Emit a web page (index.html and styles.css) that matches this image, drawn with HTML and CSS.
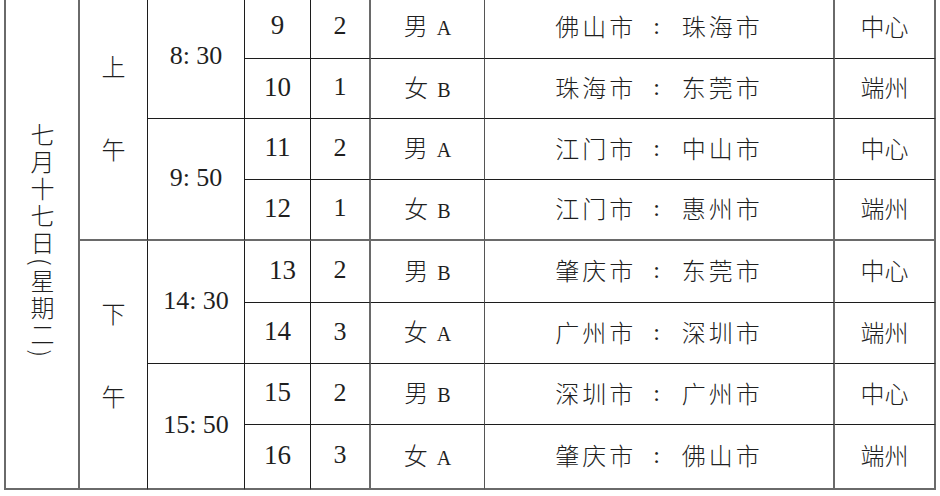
FILE: index.html
```html
<!DOCTYPE html>
<html lang="zh-CN">
<head>
<meta charset="utf-8">
<title>赛程表</title>
<link rel="stylesheet" href="styles.css">
</head>
<body>
<div class="sheet">
  <div class="cell date"><span class="vtext">七月十七日(星期二)</span></div>
  <div class="cell half top-half"><span>上</span><span>午</span></div>
  <div class="cell time t1"><span class="lat">8: 30</span></div>
  <div class="cell num"><span class="lat">9</span></div>
  <div class="cell n"><span class="lat">2</span></div>
  <div class="cell grp"><span>男<span class="let">A</span></span></div>
  <div class="cell match"><span class="city">佛山市</span><span class="colon">:</span><span class="city">珠海市</span></div>
  <div class="cell venue">中心</div>

  <div class="cell num"><span class="lat">10</span></div>
  <div class="cell n"><span class="lat">1</span></div>
  <div class="cell grp"><span>女<span class="let">B</span></span></div>
  <div class="cell match"><span class="city">珠海市</span><span class="colon">:</span><span class="city">东莞市</span></div>
  <div class="cell venue">端州</div>

  <div class="cell time sep"><span class="lat">9: 50</span></div>
  <div class="cell num"><span class="lat">11</span></div>
  <div class="cell n"><span class="lat">2</span></div>
  <div class="cell grp"><span>男<span class="let">A</span></span></div>
  <div class="cell match"><span class="city">江门市</span><span class="colon">:</span><span class="city">中山市</span></div>
  <div class="cell venue">中心</div>

  <div class="cell num sep"><span class="lat">12</span></div>
  <div class="cell n sep"><span class="lat">1</span></div>
  <div class="cell grp sep"><span>女<span class="let">B</span></span></div>
  <div class="cell match sep"><span class="city">江门市</span><span class="colon">:</span><span class="city">惠州市</span></div>
  <div class="cell venue sep">端州</div>

  <div class="cell half bottom-half"><span>下</span><span>午</span></div>
  <div class="cell time"><span class="lat">14: 30</span></div>
  <div class="cell num nudge"><span class="lat">13</span></div>
  <div class="cell n"><span class="lat">2</span></div>
  <div class="cell grp"><span>男<span class="let">B</span></span></div>
  <div class="cell match"><span class="city">肇庆市</span><span class="colon">:</span><span class="city">东莞市</span></div>
  <div class="cell venue">中心</div>

  <div class="cell num"><span class="lat">14</span></div>
  <div class="cell n"><span class="lat">3</span></div>
  <div class="cell grp"><span>女<span class="let">A</span></span></div>
  <div class="cell match"><span class="city">广州市</span><span class="colon">:</span><span class="city">深圳市</span></div>
  <div class="cell venue">端州</div>

  <div class="cell time last"><span class="lat">15: 50</span></div>
  <div class="cell num"><span class="lat">15</span></div>
  <div class="cell n"><span class="lat">2</span></div>
  <div class="cell grp"><span>男<span class="let">B</span></span></div>
  <div class="cell match"><span class="city">深圳市</span><span class="colon">:</span><span class="city">广州市</span></div>
  <div class="cell venue">中心</div>

  <div class="cell num last"><span class="lat">16</span></div>
  <div class="cell n last"><span class="lat">3</span></div>
  <div class="cell grp last"><span>女<span class="let">A</span></span></div>
  <div class="cell match last"><span class="city">肇庆市</span><span class="colon">:</span><span class="city">佛山市</span></div>
  <div class="cell venue last">端州</div>
</div>
</body>
</html>
```

FILE: styles.css
```css
html, body {
  margin: 0;
  padding: 0;
  background: #ffffff;
}

body {
  width: 940px;
  height: 496px;
  overflow: hidden;
  color: #1f1f1f;
  font-family: "Noto Sans CJK SC", "Noto Sans", sans-serif;
  font-weight: 300;
}

.sheet {
  display: grid;
  grid-template-columns: 74px 68px 97px 66px 60px 114px 350px 101px;
  grid-template-rows: 63px 60px 61px 61px 62px 61px 61px 65px;
  margin: -4px 0 0 4px;
  width: 932px;
  border-left: 2px solid #6a6a6a;
}

.cell {
  box-sizing: border-box;
  display: flex;
  align-items: center;
  justify-content: center;
  border-right: 1px solid #1c1c1c;
  border-bottom: 1px solid #1c1c1c;
  font-size: 24px;
  line-height: 1;
  padding-bottom: 3px;
}

.date {
  grid-row: span 8;
  border-right: 2px solid #6a6a6a;
  border-bottom: 2px solid #6a6a6a;
  padding-bottom: 0;
}

.vtext {
  writing-mode: vertical-rl;
  text-orientation: mixed;
  letter-spacing: 3px;
  font-size: 24px;
}

.half {
  grid-row: span 4;
  flex-direction: column;
  gap: 59px;
  padding-bottom: 20px;
  border-bottom: 2px solid #6a6a6a;
}

.bottom-half {
  border-bottom: 2px solid #6a6a6a;
}

.time {
  grid-row: span 2;
}

.lat {
  font-family: "Liberation Serif", "Times New Roman", serif;
  font-weight: 400;
  font-size: 26px;
}

.num .lat {
  font-size: 27px;
}

.nudge {
  padding-left: 10px;
}

.n {
  border-right: 2px solid #6a6a6a;
}

.grp {
  border-right: 1px solid #555555;
}

.let {
  font-family: "Liberation Serif", "Times New Roman", serif;
  font-weight: 400;
  font-size: 20px;
  margin-left: 9px;
  vertical-align: baseline;
}

.match {
  border-right: 2px solid #6a6a6a;
}

.city {
  letter-spacing: 3px;
}

.colon {
  font-family: "Liberation Serif", "Times New Roman", serif;
  font-weight: 400;
  font-size: 24px;
  padding: 0 22px 0 17px;
}

.venue {
  border-right: 2px solid #6a6a6a;
}

.sep {
  border-bottom: 2px solid #6a6a6a;
}

.last {
  border-bottom: 2px solid #6a6a6a;
}
```
